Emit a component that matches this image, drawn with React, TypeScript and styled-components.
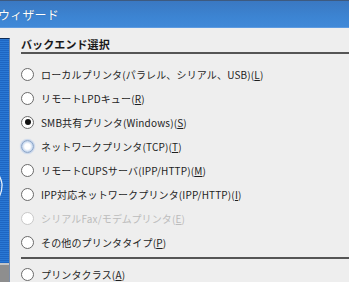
import React from 'react';
import styled, { createGlobalStyle } from 'styled-components';

const GlobalStyle = createGlobalStyle`
    html, body {
        margin: 0;
        padding: 0;
        background: #eeeeee;
        overflow: hidden;
    }
`;

const Window = styled.div`
    width: 349px;
    height: 282px;
    display: flex;
    flex-direction: column;
    background: #eeeeee;
    font-family: 'Noto Sans CJK JP', 'DejaVu Sans', sans-serif;
    overflow: hidden;
`;

const TitleBar = styled.div`
    height: 26px;
    flex-shrink: 0;
    display: flex;
    align-items: center;
    border-top: 1px solid #3d5a80;
    background: linear-gradient(#3a78c2, #3c84d2 60%, #4089d8);
    border-bottom: 1px solid #5d9ae0;
`;

const Title = styled.span`
    margin-left: -2px;
    color: #ffffff;
    font-size: 12px;
    letter-spacing: 0.2px;
    text-shadow: 0 0 1px rgba(0, 0, 0, 0.3);
`;

const Body = styled.div`
    flex: 1;
    display: flex;
    padding-top: 10px;
    min-height: 0;
`;

const Sidebar = styled.div`
    position: relative;
    width: 9px;
    flex-shrink: 0;
    border-top: 1px solid #0d2a55;
    border-right: 1px solid #7c8ea8;
    background: repeating-linear-gradient(#2a78d4 0px, #2a78d4 1px, #1e66c2 1px, #1e66c2 2px);
    overflow: hidden;
`;

const SidebarArt = styled.svg`
    position: absolute;
    left: 0;
    top: 0;
`;

const Content = styled.div`
    flex: 1;
    padding-left: 11px;
    display: flex;
    flex-direction: column;
`;

const Heading = styled.div`
    flex-shrink: 0;
    font-size: 11px;
    font-weight: bold;
    color: #1a1a1a;
    height: 12px;
    line-height: 12px;
    padding-bottom: 2px;
    border-bottom: 2px solid #555555;
    letter-spacing: 0.1px;
`;

const Options = styled.div`
    display: flex;
    flex-direction: column;
    padding-top: 8px;
`;

const Row = styled.div<{ $disabled?: boolean }>`
    height: 24px;
    flex-shrink: 0;
    display: flex;
    align-items: center;
    gap: 7px;
    font-size: 10px;
    color: ${({ $disabled }) => ($disabled ? '#bcbcbc' : '#1e1e1e')};
    letter-spacing: 0.15px;
    white-space: nowrap;
`;

const Radio = styled.span<{ $checked?: boolean; $focus?: boolean; $disabled?: boolean }>`
    position: relative;
    width: 11px;
    height: 11px;
    flex-shrink: 0;
    border-radius: 50%;
    border: 1px solid ${({ $disabled, $focus }) => ($disabled ? '#c8c8c8' : $focus ? '#8aa4c8' : '#6a6a6a')};
    background: ${({ $focus }) => ($focus ? 'radial-gradient(circle, #ffffff 35%, #b6cbe8 75%)' : '#ffffff')};
    box-shadow: ${({ $focus }) => ($focus ? '0 0 1px 1px #c4d4ec' : 'none')};

    &::after {
        content: '';
        display: ${({ $checked }) => ($checked ? 'block' : 'none')};
        position: absolute;
        left: 2.5px;
        top: 2.5px;
        width: 6px;
        height: 6px;
        border-radius: 50%;
        background: #111111;
    }
`;

const Separator = styled.div`
    height: 2px;
    flex-shrink: 0;
    background: #555555;
    margin: 3px 0 3px;
`;

const Key = styled.u``;

interface OptionProps {
    label: string;
    hotkey: string;
    checked?: boolean;
    focus?: boolean;
    disabled?: boolean;
}

function Option({ label, hotkey, checked, focus, disabled }: OptionProps): React.ReactElement {
    return (
        <Row $disabled={disabled}>
            <Radio $checked={checked} $focus={focus} $disabled={disabled} />
            <span>
                {label}(<Key>{hotkey}</Key>)
            </span>
        </Row>
    );
}

const options: OptionProps[] = [
    { label: 'ローカルプリンタ(パラレル、シリアル、USB)', hotkey: 'L' },
    { label: 'リモートLPDキュー', hotkey: 'R' },
    { label: 'SMB共有プリンタ(Windows)', hotkey: 'S', checked: true },
    { label: 'ネットワークプリンタ(TCP)', hotkey: 'T', focus: true },
    { label: 'リモートCUPSサーバ(IPP/HTTP)', hotkey: 'M' },
    { label: 'IPP対応ネットワークプリンタ(IPP/HTTP)', hotkey: 'I' },
    { label: 'シリアルFax/モデムプリンタ', hotkey: 'E', disabled: true },
    { label: 'その他のプリンタタイプ', hotkey: 'P' },
];

export default function App(): React.ReactElement {
    return (
        <>
            <GlobalStyle />
            <Window>
                <TitleBar>
                    <Title>ウィザード</Title>
                </TitleBar>
                <Body>
                    <Sidebar>
                        <SidebarArt width="9" height="245" viewBox="0 0 9 245">
                            <path d="M-20 125 A 22 24 0 0 1 2 145 A 22 24 0 0 1 -20 170" fill="none" stroke="#e8f0fa" strokeWidth="1.3" />
                            <rect x="0" y="224" width="9" height="21" fill="#8e8e8e" />
                            <rect x="0" y="224" width="9" height="2" fill="#c4c4c4" />
                        </SidebarArt>
                    </Sidebar>
                    <Content>
                        <Heading>バックエンド選択</Heading>
                        <Options>
                            {options.map((o) => (
                                <Option key={o.hotkey} {...o} />
                            ))}
                            <Separator />
                            <Option label="プリンタクラス" hotkey="A" />
                        </Options>
                    </Content>
                </Body>
            </Window>
        </>
    );
}
